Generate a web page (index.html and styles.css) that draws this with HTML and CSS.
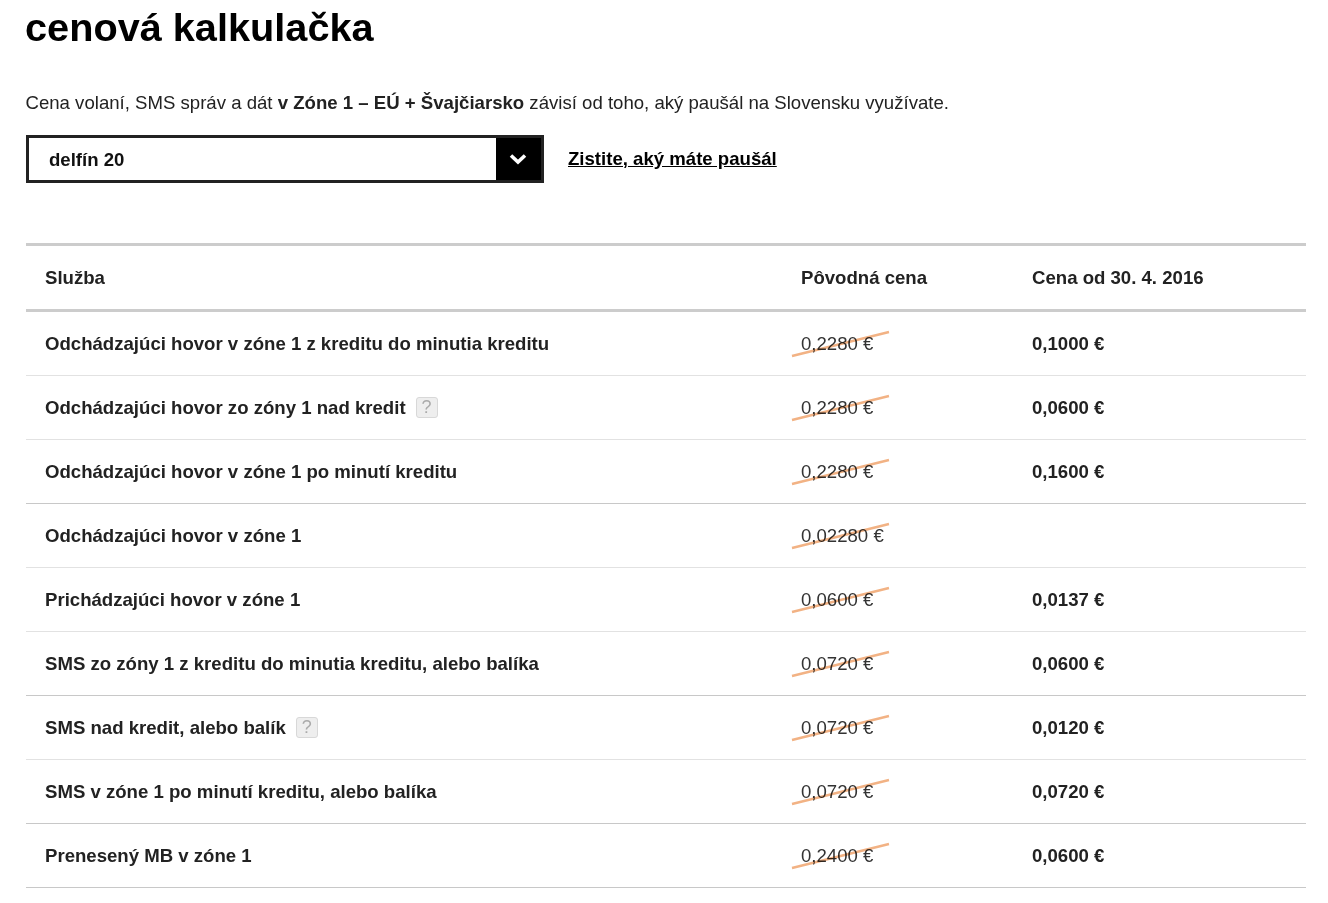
FILE: index.html
```html
<!DOCTYPE html>
<html lang="sk">
<head>
<meta charset="utf-8">
<title>cenová kalkulačka</title>
<link rel="stylesheet" href="styles.css">
</head>
<body>
<h1 class="title">cenová kalkulačka</h1>
<p class="intro">Cena volaní, SMS správ a dát <strong>v Zóne 1 – EÚ + Švajčiarsko</strong> závisí od toho, aký paušál na Slovensku využívate.</p>
<div class="picker">
  <div class="select">
    <span class="select-value">delfín 20</span>
    <span class="select-btn"><svg class="chevron" width="18" height="12" viewBox="0 0 18 12"><path d="M2 2.5 L9 9 L16 2.5" fill="none" stroke="#fff" stroke-width="3.6"/></svg></span>
  </div>
  <a class="plan-link" href="#">Zistite, aký máte paušál</a>
</div>
<table class="rates">
  <thead>
    <tr><th class="c-name">Služba</th><th class="c-old">Pôvodná cena</th><th class="c-new">Cena od 30. 4. 2016</th></tr>
  </thead>
  <tbody>
    <tr><td>Odchádzajúci hovor v zóne 1 z kreditu do minutia kreditu</td><td class="old"><span class="old-wrap">0,2280 €<svg class="strike" width="100" height="26" viewBox="0 0 100 26"><path d="M1 25 L98 1"/></svg></span></td><td>0,1000 €</td></tr>
    <tr><td>Odchádzajúci hovor zo zóny 1 nad kredit<span class="help">?</span></td><td class="old"><span class="old-wrap">0,2280 €<svg class="strike" width="100" height="26" viewBox="0 0 100 26"><path d="M1 25 L98 1"/></svg></span></td><td>0,0600 €</td></tr>
    <tr class="strong-line"><td>Odchádzajúci hovor v zóne 1 po minutí kreditu</td><td class="old"><span class="old-wrap">0,2280 €<svg class="strike" width="100" height="26" viewBox="0 0 100 26"><path d="M1 25 L98 1"/></svg></span></td><td>0,1600 €</td></tr>
    <tr><td>Odchádzajúci hovor v zóne 1</td><td class="old"><span class="old-wrap">0,02280 €<svg class="strike" width="100" height="26" viewBox="0 0 100 26"><path d="M1 25 L98 1"/></svg></span></td><td></td></tr>
    <tr><td>Prichádzajúci hovor v zóne 1</td><td class="old"><span class="old-wrap">0,0600 €<svg class="strike" width="100" height="26" viewBox="0 0 100 26"><path d="M1 25 L98 1"/></svg></span></td><td>0,0137 €</td></tr>
    <tr class="strong-line"><td>SMS zo zóny 1 z kreditu do minutia kreditu, alebo balíka</td><td class="old"><span class="old-wrap">0,0720 €<svg class="strike" width="100" height="26" viewBox="0 0 100 26"><path d="M1 25 L98 1"/></svg></span></td><td>0,0600 €</td></tr>
    <tr><td>SMS nad kredit, alebo balík<span class="help">?</span></td><td class="old"><span class="old-wrap">0,0720 €<svg class="strike" width="100" height="26" viewBox="0 0 100 26"><path d="M1 25 L98 1"/></svg></span></td><td>0,0120 €</td></tr>
    <tr class="strong-line"><td>SMS v zóne 1 po minutí kreditu, alebo balíka</td><td class="old"><span class="old-wrap">0,0720 €<svg class="strike" width="100" height="26" viewBox="0 0 100 26"><path d="M1 25 L98 1"/></svg></span></td><td>0,0720 €</td></tr>
    <tr class="strong-line"><td>Prenesený MB v zóne 1</td><td class="old"><span class="old-wrap">0,2400 €<svg class="strike" width="100" height="26" viewBox="0 0 100 26"><path d="M1 25 L98 1"/></svg></span></td><td>0,0600 €</td></tr>
  </tbody>
</table>
</body>
</html>
```
FILE: styles.css
```css
* { box-sizing: border-box; }
html, body { margin: 0; background: #fff; }
body {
  padding: 0 22px 0 26px;
  font-family: "Liberation Sans", Arial, sans-serif;
  color: #222;
  height: 903px;
  overflow: hidden;
}
.title {
  margin: 0 0 0 -1px;
  padding-top: 5px;
  font-size: 39.7px;
  line-height: 44px;
  font-weight: 700;
  color: #000;
}
.intro {
  margin: 42px 0 0 -0.5px;
  font-size: 18.6px;
  line-height: 24px;
}
.intro strong { font-weight: 700; }
.picker {
  display: flex;
  align-items: center;
  margin-top: 20px;
}
.select {
  width: 518px;
  height: 48px;
  border: 3px solid #222;
  display: flex;
  align-items: stretch;
  justify-content: space-between;
}
.select-value {
  display: flex;
  align-items: center;
  padding: 1px 0 0 20px;
  font-size: 18.6px;
  font-weight: 700;
  color: #111;
}
.select-btn {
  width: 45px;
  background: #000;
  display: flex;
  align-items: center;
  justify-content: center;
}
.chevron { margin-right: 1px; }
.plan-link {
  margin-left: 24px;
  font-size: 18.6px;
  font-weight: 700;
  color: #000;
  text-decoration: underline;
}
.rates {
  width: 1280px;
  margin-top: 60px;
  border-collapse: separate;
  border-spacing: 0;
  table-layout: fixed;
  font-size: 18.6px;
  border-top: 3px solid #ccc;
}
.rates th, .rates td {
  height: 64px;
  padding: 0 0 0 19px;
  text-align: left;
  font-weight: 700;
  border-bottom: 1px solid #e2e2e2;
}
.rates th {
  height: 66px;
  border-bottom: 3px solid #ccc;
}
.c-name { width: 756px; }
.c-old { width: 231px; }
.rates .strong-line td { border-bottom-color: #c8c8c8; }
.rates td.old { font-weight: 400; color: #333; }
.old-wrap { position: relative; display: inline-block; }
.strike {
  position: absolute;
  left: -10px;
  top: -2px;
  overflow: visible;
  mix-blend-mode: multiply;
}
.strike path { stroke: #f2b284; stroke-width: 2.4; fill: none; }
.help {
  display: inline-block;
  width: 22px;
  height: 21px;
  margin-left: 10px;
  vertical-align: 1px;
  text-align: center;
  font-size: 18px;
  font-weight: 400;
  line-height: 19px;
  color: #aaa;
  background: #eee;
  border: 1px solid #d8d8d8;
  border-radius: 3px;
}
```
